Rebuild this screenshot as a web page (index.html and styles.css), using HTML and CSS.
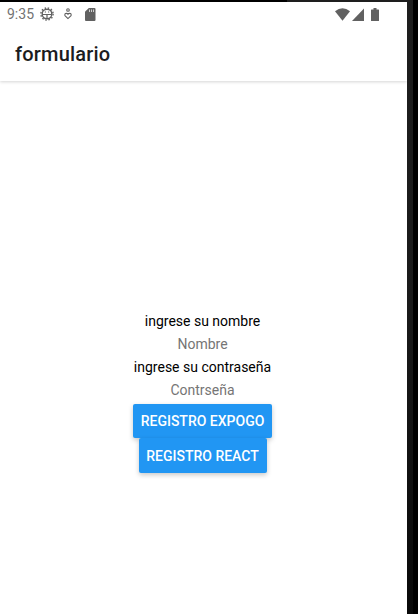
FILE: index.html
```html
<!DOCTYPE html>
<html lang="es">
<head>
<meta charset="utf-8">
<title>formulario</title>
<link rel="stylesheet" href="styles.css">
</head>
<body>
<div class="device">
  <div class="screen">
    <div class="status">
      <span class="clock">9:35</span>
      <svg class="bug" width="14" height="14" viewBox="0 0 14 14" fill="none" stroke="#616161">
        <circle cx="7" cy="7" r="4.800" stroke-width="1.400"/>
        <circle cx="7" cy="7" r="6.100" stroke-width="1.400" stroke-dasharray="1.500 1.694"/>
        <path d="M2.500 7.500h9M7 7.500v4" stroke-width="1.200"/>
        <path d="M4.800 5h1.200M8 5h1.200" stroke-width="1"/>
      </svg>
      <svg class="care" width="8" height="12" viewBox="0 0 8 12" fill="none" stroke="#616161" stroke-width="1.100">
        <circle cx="4" cy="2" r="1.300"/>
        <path d="M4 10.600 1.200 7.900C-.2 5.900 2.600 4.300 4 6.300 5.400 4.300 8.200 5.900 6.800 7.900Z"/>
      </svg>
      <svg class="card" width="11" height="13" viewBox="0 0 11 13">
        <path d="M3.800 0H9.500q1 0 1 1v11q0 1-1 1H1q-1 0-1-1V3.800Z" fill="#616161"/>
        <path d="M4.500 1.500v2.500M6.500 1.500v2.500M8.500 1.500v2.500" stroke="#fff" stroke-width=".7"/>
      </svg>
      <svg class="wifi" width="15" height="13" viewBox="0 0 15 13"><path d="M0 3.300Q7.500-3 15 3.300L7.500 12.700Z" fill="#616161"/></svg>
      <svg class="signal" width="12" height="13" viewBox="0 0 12 13"><path d="M12 .5v12.500H0Z" fill="#616161"/></svg>
      <svg class="battery" width="8" height="13" viewBox="0 0 8 13"><path d="M2.500 0h3v1.400H7.500q.5 0 .5.500V12.500q0 .5-.5.500H.5q-.5 0-.5-.5V1.900q0-.5.500-.5h2Z" fill="#616161"/></svg>
    </div>
    <header class="header"><h1>formulario</h1></header>
    <main class="form">
      <label class="label">ingrese su nombre</label>
      <div class="field">Nombre</div>
      <label class="label">ingrese su contraseña</label>
      <div class="field">Contrseña</div>
      <button class="button">REGISTRO EXPOGO</button>
      <button class="button second">REGISTRO REACT</button>
    </main>
  </div>
</div>
</body>
</html>
```
FILE: styles.css
```css
* { box-sizing: border-box; }
body { margin: 0; background: #000; font-family: Roboto, sans-serif; }
.device {
  width: 413px;
  height: 614px;
  padding: 2px 6px 0 0;
  background: linear-gradient(#1e1e1e, #1a1a1a 50%, #090909);
  overflow: hidden;
}
.screen {
  height: 612px;
  display: flex;
  flex-direction: column;
  background: #fff;
  box-shadow: -120px -2px 0 #000;
}
.status {
  height: 24px;
  flex: none;
  display: flex;
  align-items: center;
  padding-left: 7px;
  padding-right: 28px;
  background: #fff;
}
.clock { width: 27px; font-size: 14px; line-height: 24px; color: #737373; white-space: nowrap; }
.bug { margin-left: 6px; }
.care { margin-left: 10px; }
.card { margin-left: 13px; }
.wifi { margin-left: auto; }
.signal { margin-left: 2px; }
.battery { margin-left: 7px; }
.header {
  height: 55px;
  flex: none;
  padding-left: 15px;
  background: #fff;
  box-shadow: 0 1px 3px rgba(0, 0, 0, 0.17);
  clip-path: inset(0 0 -6px);
}
.header h1 {
  margin: 0;
  font-size: 20px;
  font-weight: 500;
  line-height: 56px;
  letter-spacing: 0.2px;
  color: #1c1c1e;
}
.form {
  flex: 1;
  display: flex;
  flex-direction: column;
  align-items: center;
  padding: 231px 2px 0 0;
}
.label, .field { height: 23px; font-size: 14px; line-height: 19px; white-space: nowrap; }
.label { color: #000; }
.field { color: #757575; }
.button {
  width: 139px;
  height: 34px;
  flex: none;
  padding: 0;
  border: 0;
  border-radius: 2px;
  background: #2196f3;
  color: #fff;
  font: 500 14px/35px Roboto, sans-serif;
  white-space: nowrap;
  box-shadow: 0 2px 5px rgba(0, 0, 0, 0.22);
}
.second { width: 128px; height: 35px; line-height: 36px; }
```
